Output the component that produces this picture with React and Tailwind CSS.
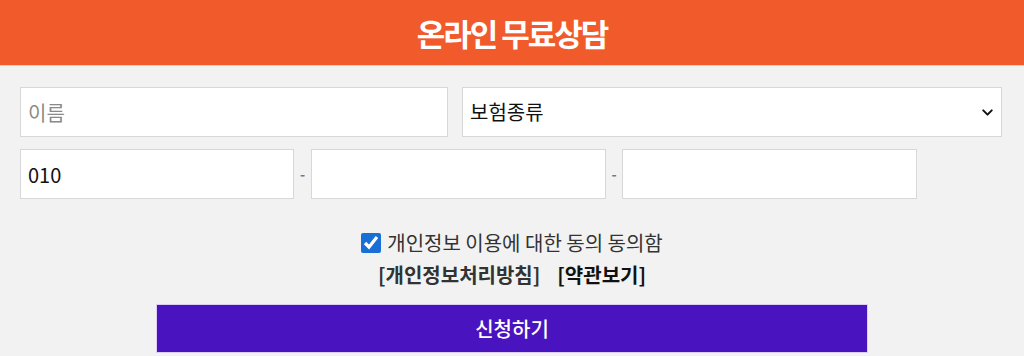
import React, { useState } from 'react';
import { ChevronDown } from 'lucide-react';

const font = { fontFamily: '"Noto Sans CJK KR", "Noto Sans", sans-serif' };

const App = () => {
    const [agree, setAgree] = useState(true);

    return (
        <div className="w-[1024px] h-[356px] bg-[#f2f2f2] overflow-hidden" style={font}>
            {/* header */}
            <div className="h-[66px] bg-[#f15a2b] flex items-center justify-center border-b border-[#f7c9b5]">
                <h2 className="text-white text-[31px] font-bold tracking-[-2px] leading-none">온라인 무료상담</h2>
            </div>

            <div className="px-[20px] pt-[21px]">
                <div className="flex gap-[14px]">
                    <input
                        placeholder="이름"
                        className="w-[428px] h-[50px] bg-white border border-[#d8d8d8] px-[7px] text-[20px] text-[#222] placeholder:text-[#8a8a8a] outline-none"
                    />
                    <div className="relative w-[540px] h-[50px]">
                        <select className="w-full h-full appearance-none bg-white border border-[#d8d8d8] px-[7px] text-[20px] text-[#111] outline-none">
                            <option>보험종류</option>
                        </select>
                        <ChevronDown size={17} strokeWidth={2.75} className="absolute right-[6px] top-[17px] text-[#111] pointer-events-none" />
                    </div>
                </div>

                <div className="flex items-center mt-[12px]">
                    <input
                        defaultValue="010"
                        className="w-[274px] h-[50px] bg-white border border-[#d8d8d8] px-[7px] text-[20px] text-[#111] outline-none"
                    />
                    <span className="w-[17px] text-center text-[14px] font-bold text-[#777]">-</span>
                    <input className="w-[295px] h-[50px] bg-white border border-[#d8d8d8] outline-none" />
                    <span className="w-[16px] text-center text-[14px] font-bold text-[#777]">-</span>
                    <input className="w-[295px] h-[50px] bg-white border border-[#d8d8d8] outline-none" />
                </div>

                <div className="flex flex-col items-center mt-[34px]">
                    <label className="flex items-center gap-[6px] h-[20px] text-[20px] text-[#333] leading-none">
                        <input
                            type="checkbox"
                            checked={agree}
                            onChange={e => setAgree(e.target.checked)}
                            className="w-[20px] h-[20px] accent-[#1a6fd6] m-0"
                        />
                        개인정보 이용에 대한 동의 동의함
                    </label>
                    <div className="flex gap-[17px] mt-[12px] h-[20px] text-[20px] font-bold leading-none">
                        <a className="text-[#333]">[개인정보처리방침]</a>
                        <a className="text-[#111]">[약관보기]</a>
                    </div>
                </div>

                <div className="flex justify-center mt-[19px]">
                    <button className="w-[712px] h-[49px] bg-[#4914bf] border border-[#dccff3] text-white text-[20px] font-medium">
                        신청하기
                    </button>
                </div>
            </div>
        </div>
    );
};

export default App;
